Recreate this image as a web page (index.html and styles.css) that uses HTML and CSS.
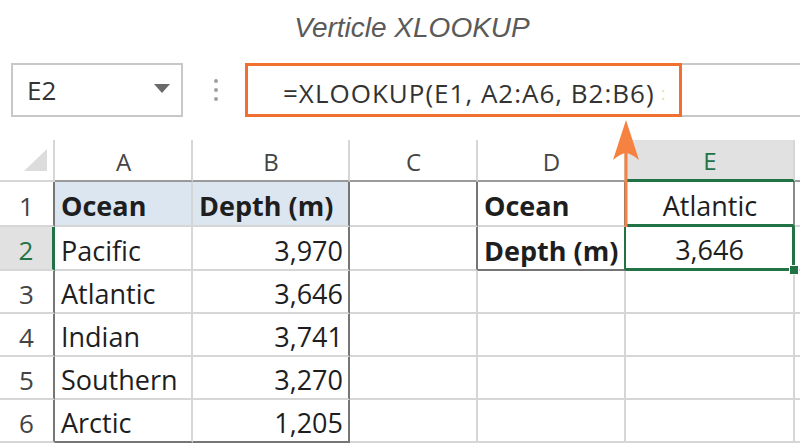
FILE: index.html
```html
<!DOCTYPE html>
<html lang="en">
<head>
    <meta charset="UTF-8">
    <title>Verticle XLOOKUP</title>
    <link rel="stylesheet" href="styles.css">
</head>
<body>

<div class="page">
    <h1 class="title">Verticle XLOOKUP</h1>

    <div class="formula-bar">
        <div class="name-box">
            <span>E2</span>
            <span class="caret"></span>
        </div>
        <div class="dots"><i></i><i></i><i></i></div>
        <div class="formula-hi">=XLOOKUP(E1, A2:A6, B2:B6)<span class="tick">:</span></div>
        <div class="formula-rest"></div>
    </div>

    <div class="sheet">
        <!-- column headers -->
        <div class="cell corner"><span class="corner-tri"></span></div>
        <div class="cell col-head">A</div>
        <div class="cell col-head">B</div>
        <div class="cell col-head">C</div>
        <div class="cell col-head">D</div>
        <div class="cell col-head active">E</div>
        <div class="cell col-head last"></div>

        <!-- row 1 -->
        <div class="cell row-head">1</div>
        <div class="cell head-fill bold">Ocean</div>
        <div class="cell head-fill bold tbl-right">Depth (m)</div>
        <div class="cell tbl-right"></div>
        <div class="cell bold tbl-right">Ocean</div>
        <div class="cell center e1">Atlantic</div>
        <div class="cell last"></div>

        <!-- row 2 -->
        <div class="cell row-head active">2</div>
        <div class="cell">Pacific</div>
        <div class="cell num tbl-right">3,970</div>
        <div class="cell tbl-right"></div>
        <div class="cell bold d2">Depth (m)</div>
        <div class="cell center e2">3,646<span class="handle"></span></div>
        <div class="cell last"></div>

        <!-- row 3 -->
        <div class="cell row-head">3</div>
        <div class="cell">Atlantic</div>
        <div class="cell num tbl-right">3,646</div>
        <div class="cell"></div>
        <div class="cell"></div>
        <div class="cell"></div>
        <div class="cell last"></div>

        <!-- row 4 -->
        <div class="cell row-head">4</div>
        <div class="cell">Indian</div>
        <div class="cell num tbl-right">3,741</div>
        <div class="cell"></div>
        <div class="cell"></div>
        <div class="cell"></div>
        <div class="cell last"></div>

        <!-- row 5 -->
        <div class="cell row-head">5</div>
        <div class="cell">Southern</div>
        <div class="cell num tbl-right">3,270</div>
        <div class="cell"></div>
        <div class="cell"></div>
        <div class="cell"></div>
        <div class="cell last"></div>

        <!-- row 6 -->
        <div class="cell row-head">6</div>
        <div class="cell tbl-bottom">Arctic</div>
        <div class="cell num tbl-right tbl-bottom">1,205</div>
        <div class="cell"></div>
        <div class="cell"></div>
        <div class="cell"></div>
        <div class="cell last"></div>
    </div>

    <!-- arrow from E2 up to the formula -->
    <svg class="arrow" width="32" height="112" viewBox="0 0 32 112">
        <line x1="16" y1="20" x2="16" y2="109" stroke="#f58240" stroke-width="3"/>
        <path d="M16 2 L29 42 Q22 36 16 35 Q10 36 3 42 Z" fill="#f58240"/>
    </svg>
</div>

</body>
</html>
```

FILE: styles.css
```css
body {
    margin: 0;
    padding: 0;
    background-color: #fff;
    font-family: "Open Sans", "Noto Sans", sans-serif;
    color: #222;
}
.page {
    position: relative;
    width: 800px;
    height: 445px;
    overflow: hidden;
}

.title {
    margin: 0;
    height: 63px;
    box-sizing: border-box;
    padding: 14px 0 0 24px;
    text-align: center;
    font-family: "Liberation Sans", Arial, sans-serif;
    font-style: italic;
    font-weight: normal;
    font-size: 28px;
    line-height: 28px;
    color: #5a5a5a;
}

/* formula bar */
.formula-bar {
    display: flex;
    height: 54px;
    padding-left: 11px;
}
.name-box {
    width: 172px;
    box-sizing: border-box;
    border: 2px solid #c8c8c8;
    display: flex;
    align-items: center;
    justify-content: space-between;
    padding: 0 11px 0 14px;
    font-size: 26px;
    color: #333;
}
.caret {
    width: 0;
    height: 0;
    border-left: 8px solid transparent;
    border-right: 8px solid transparent;
    border-top: 9px solid #6a6a6a;
    margin-bottom: 4px;
}
.dots {
    width: 62px;
    box-sizing: border-box;
    padding-left: 4px;
    display: flex;
    flex-direction: column;
    align-items: center;
    justify-content: center;
    gap: 5px;
}
.dots i {
    width: 4px;
    height: 4px;
    border-radius: 50%;
    background-color: #a0a0a0;
}
.formula-hi {
    width: 437px;
    box-sizing: border-box;
    border: 3px solid #f0712f;
    display: flex;
    align-items: center;
    padding: 6px 0 0 35px;
    font-size: 26px;
    letter-spacing: 1px;
    color: #333;
    white-space: nowrap;
}
.formula-hi .tick {
    color: #e6dfae;
    font-size: 18px;
    margin-left: 6px;
}
.formula-rest {
    flex: 1;
    border-top: 2px solid #c8c8c8;
    border-bottom: 2px solid #c8c8c8;
}

/* sheet grid */
.sheet {
    margin-top: 23px;
    display: grid;
    grid-template-columns: 55px 138px 157px 128px 148px 169px 5px;
    grid-template-rows: 42px 45px 44px 43px 43px 43px 43px;
}
.cell {
    box-sizing: border-box;
    border-right: 2px solid #d6d6d6;
    border-bottom: 2px solid #d6d6d6;
    display: flex;
    align-items: center;
    padding: 4px 5px 0 6px;
    font-size: 27px;
    color: #1e1e1e;
    white-space: nowrap;
    overflow: hidden;
}
.cell.last {
    border-right: none;
    padding: 0;
}
.corner {
    justify-content: flex-end;
    align-items: flex-end;
    padding: 0 6px 9px 0;
}
.corner-tri {
    width: 0;
    height: 0;
    border-left: 23px solid transparent;
    border-bottom: 22px solid #dcdcdc;
}
.col-head {
    justify-content: center;
    padding-top: 2px;
    font-size: 24px;
    color: #444;
    border-bottom-color: #9a9a9a;
}
.col-head.active {
    background-color: #e1e1e1;
    color: #217346;
    border-bottom: 3px solid #217346;
}
.row-head {
    justify-content: center;
    padding: 4px 0 0 0;
    font-size: 26px;
    color: #444;
    border-right-color: #767676;
}
.row-head.active {
    background-color: #e1e1e1;
    color: #217346;
    border-right: 3px solid #217346;
}

.bold {
    font-weight: bold;
}
.num {
    justify-content: flex-end;
}
.center {
    justify-content: center;
}
.head-fill {
    background-color: #dce6f1;
}
.tbl-right {
    border-right-color: #767676;
}
.tbl-bottom {
    border-bottom-color: #767676;
}

.e1 {
    border-right-color: #8a8a8a;
    border-bottom: 3px solid #217346;
}
.d2 {
    border-right: 2px solid #217346;
    border-bottom-color: #767676;
}
.e2 {
    position: relative;
    overflow: visible;
    border-right: 3px solid #217346;
    border-bottom: 3px solid #217346;
}
.handle {
    position: absolute;
    right: -7px;
    bottom: -7px;
    width: 8px;
    height: 8px;
    background-color: #217346;
    border: 1px solid #fff;
}

.arrow {
    position: absolute;
    left: 610px;
    top: 118px;
}
```
